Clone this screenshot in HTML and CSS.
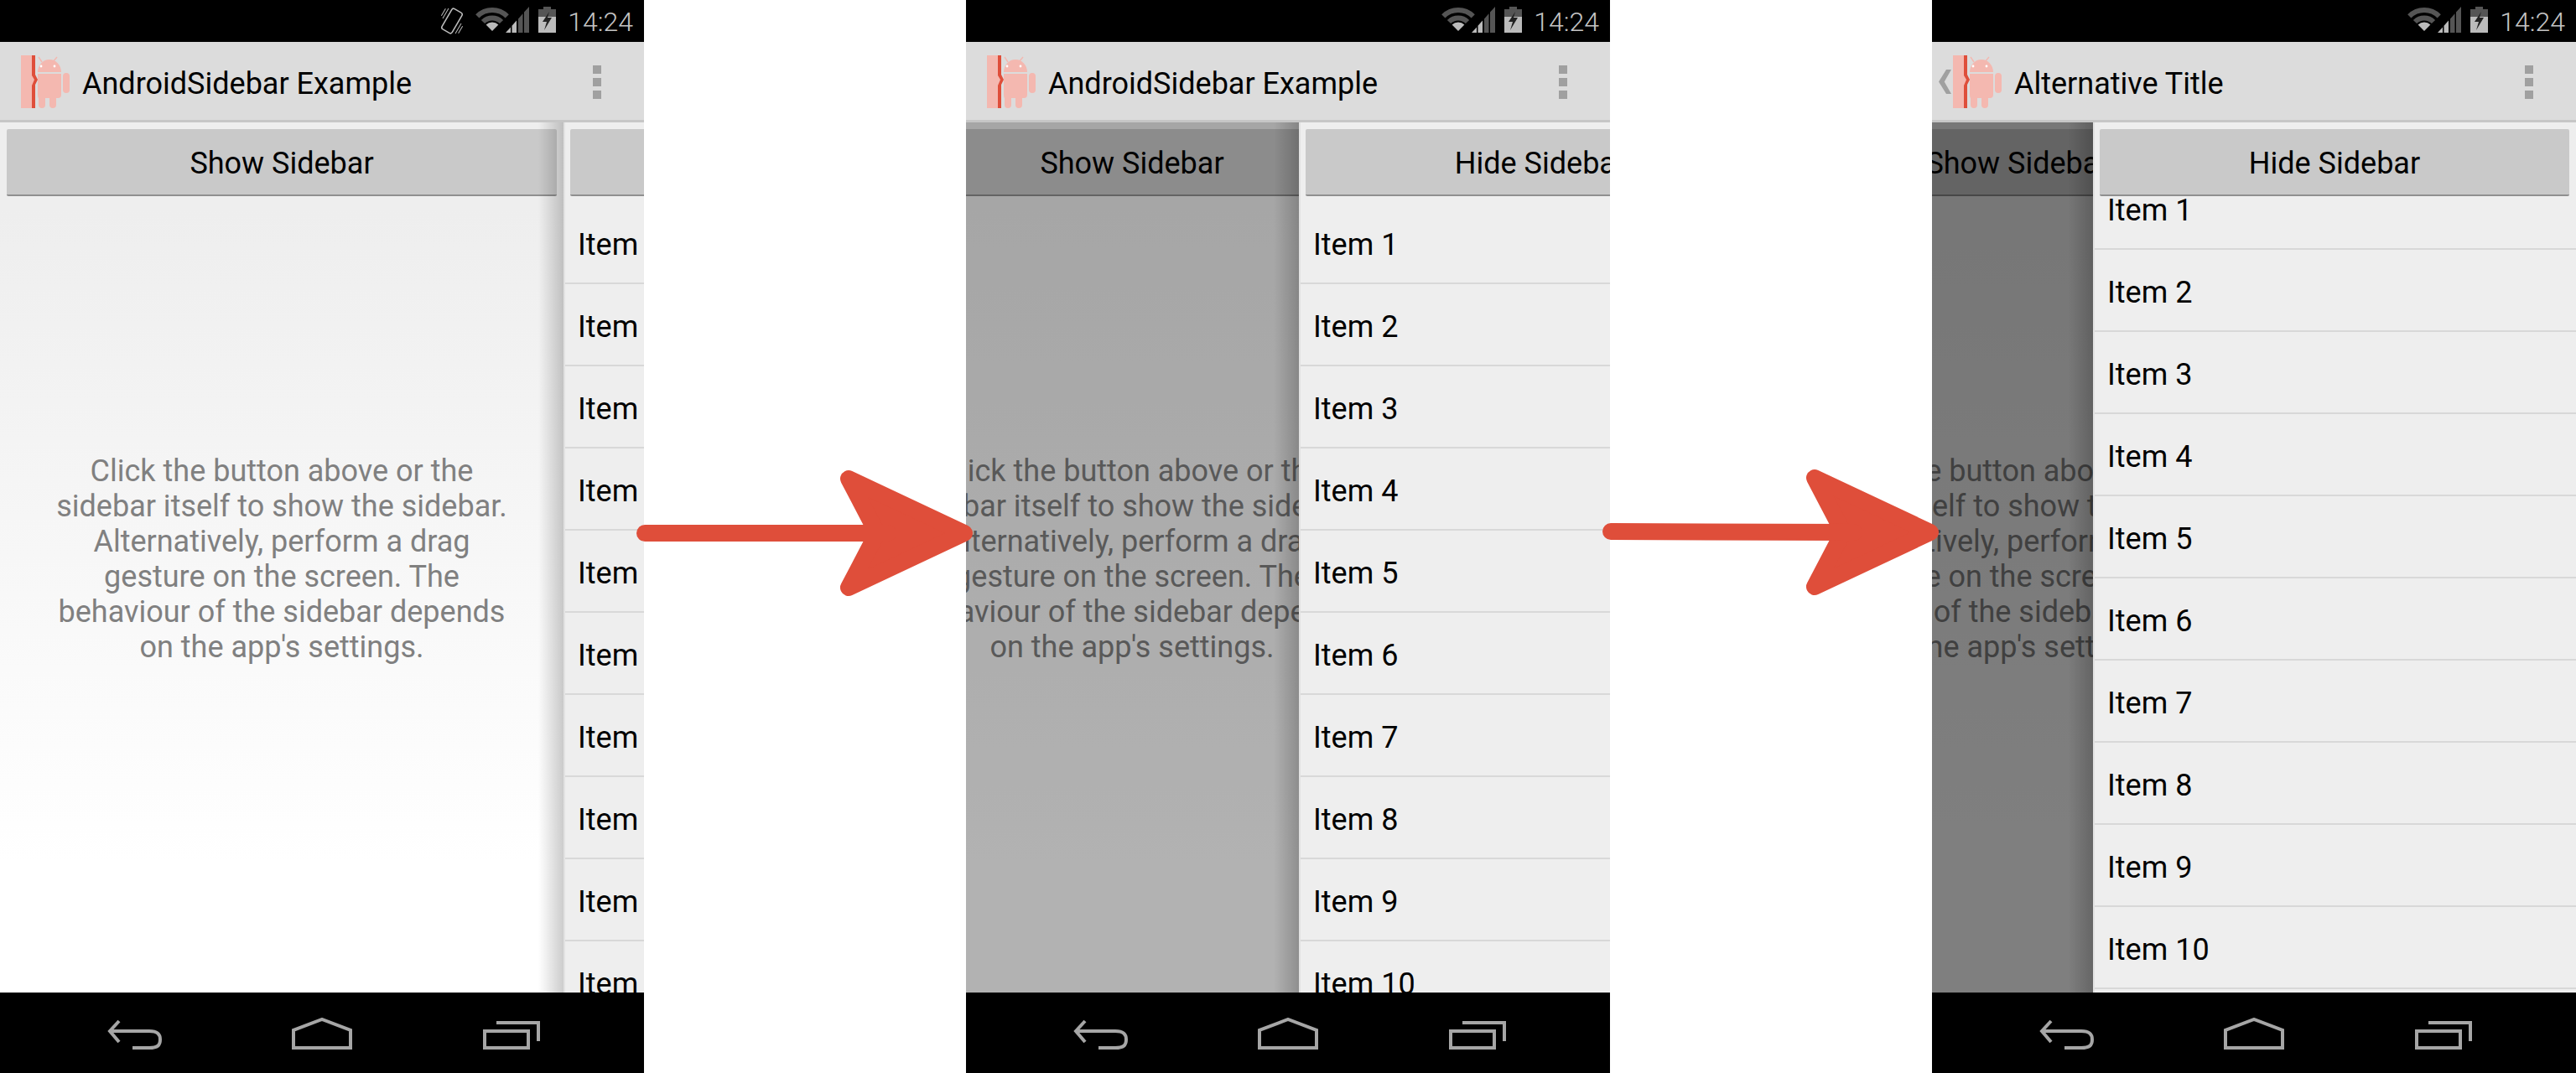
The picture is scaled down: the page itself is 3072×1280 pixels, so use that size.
FILE: index.html
```html
<!DOCTYPE html>
<html lang="en">
<head>
    <meta charset="UTF-8">
    <title>AndroidSidebar Example</title>
    <link rel="stylesheet" href="styles.css">
</head>
<body>
    <svg class="defs" width="0" height="0">
        <symbol id="logo" viewBox="0 0 58 63">
            <path fill="#f4b8b0" d="M0 0H14V24L17 29L14 36V63H0Z"/>
            <path fill="#df4e3a" d="M13 0H17V23L20 29L17 35V63H13V36L16 29L13 24Z"/>
            <path fill="#f4b8b0" d="M20 20A14 15 0 0 1 48 20Z"/>
            <path fill="#f4b8b0" d="M20 22H48V47Q48 51 44 51H42V59A4 4 0 0 1 34 59V51H29V59A4 4 0 0 1 21 59V51Q20 50 20 47Z"/>
            <rect fill="#f4b8b0" x="50" y="21" width="8" height="24" rx="4"/>
            <path stroke="#f4b8b0" stroke-width="1.4" d="M21 2L25 8M43 2L38 8"/>
            <circle fill="#fff" cx="24" cy="13" r="1.4"/>
            <circle fill="#fff" cx="40" cy="13" r="1.4"/>
        </symbol>
        <symbol id="vibrate" viewBox="0 0 28 34">
            <g fill="none" stroke="#bbb" transform="rotate(30 14 17)">
                <rect x="7" y="3" width="14" height="28" rx="2.5" stroke-width="1.6"/>
                <path stroke-width="1" d="M3 6V20M25 14V28M0 8V18M28 16V26"/>
            </g>
        </symbol>
        <symbol id="wifi" viewBox="0 0 40 30">
            <g fill="none" stroke="#555" stroke-width="6">
                <path d="M2.3 11.3A25 25 0 0 1 37.7 11.3"/>
                <path d="M9 18A15.5 15.5 0 0 1 31 18"/>
            </g>
            <path fill="#bbb" d="M20 29L12.6 21.6A10.5 10.5 0 0 1 27.4 21.6Z"/>
        </symbol>
        <symbol id="signal" viewBox="0 0 28 31">
            <path fill="#bbb" d="M0 31L6 24.4V31ZM7.5 31V22.7L13 16.6V31Z"/>
            <path fill="#555" d="M15 31V14.4L20.5 8.3V31ZM22 31V6.6L28 0V31Z"/>
        </symbol>
        <symbol id="battery" viewBox="0 0 21 31">
            <path fill="#555" d="M6 0H15V3H21V12H0V3H6Z"/>
            <rect fill="#bbb" y="12" width="21" height="19"/>
            <path fill="#222" d="M13 6L5 18H10L7 28L16 13H11Z"/>
        </symbol>
        <symbol id="back" viewBox="0 0 70 38">
            <path fill="none" stroke="#a6a6a6" stroke-width="4" d="M16 2L5 14L16 27M5 14H52C62 14 65 18 65 24C65 31 62 34 52 34H32"/>
        </symbol>
        <symbol id="home" viewBox="0 0 72 38">
            <path fill="none" stroke="#a6a6a6" stroke-width="4" d="M2 36V15L36 2L70 15V36Z"/>
        </symbol>
        <symbol id="recents" viewBox="0 0 68 34">
            <g fill="none" stroke="#a6a6a6" stroke-width="4">
                <rect x="2" y="12" width="52" height="20"/>
                <path d="M16 2H66V24"/>
            </g>
        </symbol>
        <symbol id="arrow" viewBox="0 0 420 160">
            <path fill="#df4e3a" stroke="#df4e3a" stroke-width="20" stroke-linejoin="round" d="M253 11L391 76L253 141L287 76Z"/>
            <path stroke="#df4e3a" stroke-width="20" stroke-linecap="round" d="M10 76H300"/>
        </symbol>
        <symbol id="arrow-tilted" viewBox="0 0 420 160">
            <path fill="#df4e3a" stroke="#df4e3a" stroke-width="20" stroke-linejoin="round" d="M253 11L391 76L253 141L287 76Z"/>
            <path stroke="#df4e3a" stroke-width="20" stroke-linecap="round" d="M10 75L300 76"/>
        </symbol>
    </svg>

    <div class="phone">
        <div class="status">
            <svg class="ic-vibrate"><use href="#vibrate"/></svg>
            <svg class="ic-wifi"><use href="#wifi"/></svg>
            <svg class="ic-signal"><use href="#signal"/></svg>
            <svg class="ic-battery"><use href="#battery"/></svg>
            <span class="clock">14:24</span>
        </div>
        <div class="actionbar">
            <svg class="logo"><use href="#logo"/></svg>
            <span class="title">AndroidSidebar Example</span>
            <div class="overflow"><i></i><i></i><i></i></div>
        </div>
        <div class="screen">
            <div class="main">
                <div class="btn">Show Sidebar</div>
                <p class="hint">Click the button above or the<br>sidebar itself to show the sidebar.<br>Alternatively, perform a drag<br>gesture on the screen. The<br>behaviour of the sidebar depends<br>on the app's settings.</p>
            </div>
            <div class="sidebar peek">
                <div class="btn">Hide Sidebar</div>
                <div class="list">
                    <ul>
                        <li>Item 1</li><li>Item 2</li><li>Item 3</li><li>Item 4</li><li>Item 5</li>
                        <li>Item 6</li><li>Item 7</li><li>Item 8</li><li>Item 9</li><li>Item 10</li>
                    </ul>
                </div>
            </div>
        </div>
        <div class="navbar">
            <svg class="ic-back"><use href="#back"/></svg>
            <svg class="ic-home"><use href="#home"/></svg>
            <svg class="ic-recents"><use href="#recents"/></svg>
        </div>
    </div>

    <div class="phone">
        <div class="status">
            <svg class="ic-wifi"><use href="#wifi"/></svg>
            <svg class="ic-signal"><use href="#signal"/></svg>
            <svg class="ic-battery"><use href="#battery"/></svg>
            <span class="clock">14:24</span>
        </div>
        <div class="actionbar">
            <svg class="logo"><use href="#logo"/></svg>
            <span class="title">AndroidSidebar Example</span>
            <div class="overflow"><i></i><i></i><i></i></div>
        </div>
        <div class="screen">
            <div class="main shift-half">
                <div class="btn">Show Sidebar</div>
                <p class="hint">Click the button above or the<br>sidebar itself to show the sidebar.<br>Alternatively, perform a drag<br>gesture on the screen. The<br>behaviour of the sidebar depends<br>on the app's settings.</p>
            </div>
            <div class="scrim scrim-half"></div>
            <div class="sidebar half">
                <div class="btn">Hide Sidebar</div>
                <div class="list">
                    <ul>
                        <li>Item 1</li><li>Item 2</li><li>Item 3</li><li>Item 4</li><li>Item 5</li>
                        <li>Item 6</li><li>Item 7</li><li>Item 8</li><li>Item 9</li><li>Item 10</li>
                    </ul>
                </div>
            </div>
        </div>
        <div class="navbar">
            <svg class="ic-back"><use href="#back"/></svg>
            <svg class="ic-home"><use href="#home"/></svg>
            <svg class="ic-recents"><use href="#recents"/></svg>
        </div>
    </div>

    <div class="phone">
        <div class="status">
            <svg class="ic-wifi"><use href="#wifi"/></svg>
            <svg class="ic-signal"><use href="#signal"/></svg>
            <svg class="ic-battery"><use href="#battery"/></svg>
            <span class="clock">14:24</span>
        </div>
        <div class="actionbar">
            <span class="caret"></span>
            <svg class="logo"><use href="#logo"/></svg>
            <span class="title">Alternative Title</span>
            <div class="overflow"><i></i><i></i><i></i></div>
        </div>
        <div class="screen">
            <div class="main shift-open">
                <div class="btn">Show Sidebar</div>
                <p class="hint">Click the button above or the<br>sidebar itself to show the sidebar.<br>Alternatively, perform a drag<br>gesture on the screen. The<br>behaviour of the sidebar depends<br>on the app's settings.</p>
            </div>
            <div class="scrim scrim-open"></div>
            <div class="sidebar open">
                <div class="btn">Hide Sidebar</div>
                <div class="list scrolled">
                    <ul>
                        <li>Item 1</li><li>Item 2</li><li>Item 3</li><li>Item 4</li><li>Item 5</li>
                        <li>Item 6</li><li>Item 7</li><li>Item 8</li><li>Item 9</li><li>Item 10</li>
                    </ul>
                </div>
            </div>
        </div>
        <div class="navbar">
            <svg class="ic-back"><use href="#back"/></svg>
            <svg class="ic-home"><use href="#home"/></svg>
            <svg class="ic-recents"><use href="#recents"/></svg>
        </div>
    </div>

    <svg class="arrow arrow-one"><use href="#arrow"/></svg>
    <svg class="arrow arrow-two"><use href="#arrow-tilted"/></svg>
</body>
</html>
```
FILE: styles.css
```css
* { box-sizing: border-box; }
html, body { margin: 0; padding: 0; }
body { position: relative; width: 3072px; height: 1280px; display: flex; justify-content: space-between; background: #fff; font-family: Roboto, sans-serif; font-size: 36px; color: #000; overflow: hidden; }
.defs { position: absolute; }

.phone { width: 768px; height: 1280px; display: flex; flex-direction: column; overflow: hidden; }

/* status bar */
.status { height: 50px; background: #000; display: flex; justify-content: flex-end; align-items: flex-start; padding: 8px 13px 0 0; flex-shrink: 0; }
.status svg { flex-shrink: 0; }
.ic-vibrate { width: 28px; height: 34px; margin-right: 14px; }
.ic-wifi { width: 40px; height: 30px; margin-right: -4px; }
.ic-signal { width: 28px; height: 31px; margin-right: 11px; }
.ic-battery { width: 21px; height: 31px; margin-right: 14px; }
.clock { font-size: 32px; line-height: 32px; font-weight: 300; color: #c4c4c4; margin-top: 2px; }

/* action bar */
.actionbar { height: 96px; background: #dcdcdc; border-bottom: 3px solid #c6c6c6; display: flex; align-items: flex-start; padding: 16px 0 0 25px; position: relative; flex-shrink: 0; }
.logo { width: 58px; height: 63px; flex-shrink: 0; }
.title { margin-left: 15px; line-height: 68px; }
.overflow { margin-left: auto; margin-right: 51px; margin-top: 12px; display: flex; flex-direction: column; gap: 5px; }
.overflow i { display: block; width: 10px; height: 10px; background: #a0a0a0; }
.caret { position: absolute; left: 8px; top: 33px; width: 15px; height: 29px; background: #a0a0a0; clip-path: polygon(60% 0, 100% 0, 45% 50%, 100% 100%, 60% 100%, 0 50%); }

/* content */
.screen { flex: 1; position: relative; overflow: hidden; }
.main { width: 672px; height: 100%; padding: 8px; background: linear-gradient(#eee 10%, #fff 85%); }
.shift-half { margin-left: -138px; }
.shift-open { margin-left: -234px; }
.btn { height: 80px; padding-top: 2px; background: #c9c9c9; border-bottom: 2px solid #8f8f8f; border-radius: 2px; text-align: center; line-height: 78px; flex-shrink: 0; }
.hint { margin: 307px 0 0; text-align: center; color: #808080; white-space: nowrap; }

.scrim { position: absolute; left: 0; top: 0; right: 0; bottom: 0; background: #000; }
.scrim-half { opacity: .3; }
.scrim-open { opacity: .5; }

/* sidebar sits over the main view */
.sidebar { position: absolute; top: 0; bottom: 0; width: 576px; padding: 8px 8px 0 6px; background: #eee; border-left: 2px solid #e2e2e2; display: flex; flex-direction: column; }
.sidebar::before { content: ""; position: absolute; top: 0; bottom: 0; right: 100%; margin-right: 2px; width: 30px; background: linear-gradient(to left, rgba(0,0,0,.2), rgba(0,0,0,0)); }
.peek { left: 672px; }
.half { left: 397px; }
.open { left: 192px; }

.list { flex: 1; margin: 2px -8px 0 -6px; overflow: hidden; }
.list ul { list-style: none; margin: 0; padding: 5px 0 0; }
.scrolled ul { margin-top: -41px; }
.list li { height: 98px; padding: 6px 0 0 15px; line-height: 90px; border-bottom: 2px solid #d8d8d8; }

/* nav bar */
.navbar { height: 96px; background: #000; position: relative; flex-shrink: 0; }
.navbar svg { position: absolute; }
.ic-back { left: 126px; top: 32px; width: 70px; height: 38px; }
.ic-home { left: 348px; top: 30px; width: 72px; height: 38px; }
.ic-recents { left: 576px; top: 34px; width: 68px; height: 34px; }

/* arrows between the screens */
.arrow { position: absolute; width: 420px; height: 160px; }
.arrow-one { left: 759px; top: 560px; }
.arrow-two { left: 1911px; top: 559px; }
```
